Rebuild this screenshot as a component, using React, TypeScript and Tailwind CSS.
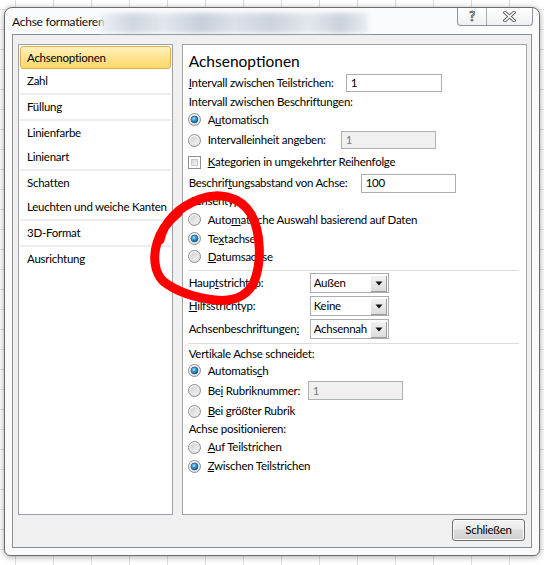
const font = "font-['Lato',sans-serif] text-[11.5px] tracking-[-0.25px]"

function Radio({ checked }: { checked?: boolean }) {
  return (
    <svg width="13" height="13" viewBox="0 0 13 13" className="shrink-0 -ml-px mr-[7px]">
      <circle cx="6.5" cy="6.5" r="6" fill="url(#rbOuter)" stroke="#8e8f8f" strokeWidth="1" />
      <circle cx="6.5" cy="6.5" r="4.2" fill="url(#rbInner)" />
      {checked && <circle cx="6.5" cy="6.5" r="3.4" fill="url(#rbDot)" stroke="#1b4f7a" strokeWidth="0.7" />}
    </svg>
  )
}

function Checkbox() {
  return (
    <div className="shrink-0 -ml-px mr-[7px] w-[13px] h-[13px] border border-[#8e8f8f] bg-white p-[2px]">
      <div className="w-full h-full border border-[#c8c8c8] bg-[linear-gradient(135deg,#d6d6d6,#f6f6f6)]" />
    </div>
  )
}

function TextBox({ value, disabled, className }: { value: string; disabled?: boolean; className: string }) {
  return (
    <div
      className={`${className} flex items-center pl-[4px] border ${
        disabled ? 'border-[#adb2b5] bg-[#f0f0f0] text-[#7a7a7a]' : 'border-[#abadb3] bg-white text-black'
      }`}
    >
      {value}
    </div>
  )
}

function Select({ value }: { value: string }) {
  return (
    <div className="w-[79px] h-[20px] flex items-center border border-[#abadb3] bg-white pl-[3px] pr-px">
      <span className="flex-1 overflow-hidden whitespace-nowrap">{value}</span>
      <div className="w-[17px] h-[17px] flex items-center justify-center border-l border-t border-white bg-[linear-gradient(to_bottom,#f2f2f2,#dcdcdc)] shadow-[inset_-1px_-1px_0_#9a9a9a]">
        <svg width="8" height="5" viewBox="0 0 8 5">
          <path d="M0.5 0.5 H7.5 L4 4.5 Z" fill="#111" />
        </svg>
      </div>
    </div>
  )
}

function NavItem({ label, selected }: { label: string; selected?: boolean }) {
  if (selected) {
    return (
      <div className="mx-px h-[23px] flex items-center pl-[6px] rounded-[3px] border border-[#e1b14d] bg-[linear-gradient(to_bottom,#fff1bd,#ffe290_50%,#ffd768)]">
        {label}
      </div>
    )
  }
  return <div className="h-[24px] flex items-center pl-[8px] whitespace-nowrap">{label}</div>
}

function NavSep() {
  return <div className="mx-px h-[2px] bg-[#ecedf1]" />
}

function Divider() {
  return <div className="-ml-px mr-[7px] mt-[4px] mb-[2px] h-px bg-[#dcdcdc]" />
}

export default function App() {
  return (
    <div
      className={`${font} relative w-[544px] h-[565px] overflow-hidden bg-white pl-[4px] pt-[7px] leading-[16px] text-black [background-image:linear-gradient(to_right,#dcdcdc_1px,transparent_1px),linear-gradient(to_bottom,#e2e2e2_1px,transparent_1px)] [background-size:38px_20px] [background-position:15px_9px]`}
    >
      <svg width="0" height="0" className="absolute">
        <defs>
          <radialGradient id="rbOuter" cx="0.35" cy="0.3" r="0.8">
            <stop offset="0" stopColor="#ffffff" />
            <stop offset="1" stopColor="#d9d9d9" />
          </radialGradient>
          <linearGradient id="rbInner" x1="0" y1="0" x2="1" y2="1">
            <stop offset="0" stopColor="#cfcfcf" />
            <stop offset="1" stopColor="#f4f4f4" />
          </linearGradient>
          <radialGradient id="rbDot" cx="0.4" cy="0.35" r="0.7">
            <stop offset="0" stopColor="#9fdcff" />
            <stop offset="0.55" stopColor="#2a8fd0" />
            <stop offset="1" stopColor="#0d4f86" />
          </radialGradient>
        </defs>
      </svg>

      <div className="w-[536px] h-[549px] flex flex-col rounded-t-[8px] rounded-b-[6px] border border-[#6c6c6c] bg-[#fafbfc] px-[7px] pb-[7px] shadow-[0_1px_6px_rgba(0,0,0,0.35)]">
        {/* title bar */}
        <div className="h-[27px] flex items-start">
          <div className="pt-[6px] whitespace-nowrap text-[12px] text-[#111]">Achse formatieren</div>
          <div className="mt-[5px] ml-[-4px] w-[268px] h-[20px] blur-[2px] opacity-80 bg-[linear-gradient(to_right,#eef1f5,#c6cedb_12%,#dde2ea_24%,#bcc5d3_38%,#d6dce5_50%,#c2cad7_64%,#dfe4ea_78%,#c0c8d5_90%,#e6eaef)]" />
          <div className="ml-auto -mr-px flex h-[18px] rounded-b-[4px] border border-t-0 border-[#8f949b] bg-[linear-gradient(to_bottom,#ffffff,#eef0f3)]">
            <div className="w-[29px] flex items-center justify-center border-r border-[#a9adb3] text-[13px] font-bold text-white [-webkit-text-stroke:0.8px_#4a4a4a] leading-none">
              ?
            </div>
            <div className="w-[45px] flex items-center justify-center">
              <svg width="13" height="11" viewBox="0 0 13 11">
                <path d="M2 1.5 L11 9.5 M11 1.5 L2 9.5" stroke="#555" strokeWidth="3.4" strokeLinecap="square" />
                <path d="M2 1.5 L11 9.5 M11 1.5 L2 9.5" stroke="#fff" strokeWidth="1.6" strokeLinecap="square" />
              </svg>
            </div>
          </div>
        </div>

        {/* client area */}
        <div className="flex-1 flex flex-col border border-[#8a8d91] bg-[#f0f0f0] pl-[5px] pr-[4px] pt-[9px] pb-[6px]">
          <div className="flex h-[471px]">
            <div className="w-[155px] border border-[#9da1a8] bg-white pt-px">
              <NavItem label="Achsenoptionen" selected />
              <NavItem label="Zahl" />
              <NavSep />
              <NavItem label="Füllung" />
              <NavSep />
              <NavItem label="Linienfarbe" />
              <NavItem label="Linienart" />
              <NavSep />
              <NavItem label="Schatten" />
              <NavItem label="Leuchten und weiche Kanten" />
              <NavSep />
              <NavItem label="3D-Format" />
              <NavSep />
              <NavItem label="Ausrichtung" />
            </div>

            <div className="ml-[9px] w-[346px] border border-[#a3a3a3] bg-white pl-[6px] pt-[5px] whitespace-nowrap">
              <div className="h-[22px] flex items-center text-[15.5px] tracking-normal">Achsenoptionen</div>
              <div className="h-[22px] flex items-center">
                <span className="w-[157px]">
                  <u>I</u>ntervall zwischen Teilstrichen:
                </span>
                <TextBox value="1" className="w-[96px] h-[18px]" />
              </div>
              <div className="h-[16px] flex items-center">Intervall zwischen Beschriftungen:</div>
              <div className="h-[19px] flex items-center">
                <Radio checked />
                <span>
                  A<u>u</u>tomatisch
                </span>
              </div>
              <div className="h-[22px] flex items-center">
                <Radio />
                <span className="w-[133px]">
                  Intervalleinheit an<u>g</u>eben:
                </span>
                <TextBox value="1" disabled className="w-[95px] h-[18px]" />
              </div>
              <div className="h-[22px] flex items-center">
                <Checkbox />
                <span>
                  <u>K</u>ategorien in umgekehrter Reihenfolge
                </span>
              </div>
              <div className="h-[20px] flex items-center">
                <span className="w-[172px]">
                  Beschrif<u>t</u>ungsabstand von Achse:
                </span>
                <TextBox value="100" className="w-[95px] h-[19px]" />
              </div>
              <div className="h-[16px] flex items-center">Achsentyp:</div>
              <div className="h-[21px] flex items-center">
                <Radio />
                <span>
                  Auto<u>m</u>atische Auswahl basierend auf Daten
                </span>
              </div>
              <div className="h-[17px] flex items-center">
                <Radio checked />
                <span>
                  Te<u>x</u>tachse
                </span>
              </div>
              <div className="h-[19px] flex items-center">
                <Radio />
                <span>
                  <u>D</u>atumsachse
                </span>
              </div>
              <Divider />
              <div className="h-[20px] flex items-center">
                <span className="w-[121px]">
                  Haup<u>t</u>strichtyp:
                </span>
                <Select value="Außen" />
              </div>
              <div className="mt-[3px] h-[20px] flex items-center">
                <span className="w-[121px]">
                  <u>H</u>ilfsstrichtyp:
                </span>
                <Select value="Keine" />
              </div>
              <div className="mt-[3px] h-[20px] flex items-center">
                <span className="w-[121px]">
                  Achsenbeschriftungen<u>:</u>
                </span>
                <Select value="Achsennah" />
              </div>
              <Divider />
              <div className="h-[16px] flex items-center">Vertikale Achse schneidet:</div>
              <div className="h-[17px] flex items-center">
                <Radio checked />
                <span>
                  Automatis<u>c</u>h
                </span>
              </div>
              <div className="h-[23px] flex items-center">
                <Radio />
                <span className="w-[100px]">
                  Be<u>i</u> Rubriknummer:
                </span>
                <TextBox value="1" disabled className="w-[95px] h-[19px]" />
              </div>
              <div className="h-[18px] flex items-center">
                <Radio />
                <span>
                  <u>B</u>ei größter Rubrik
                </span>
              </div>
              <div className="h-[18px] flex items-center">Achse positionieren:</div>
              <div className="h-[18px] flex items-center">
                <Radio />
                <span>
                  <u>A</u>uf Teilstrichen
                </span>
              </div>
              <div className="h-[20px] flex items-center">
                <Radio checked />
                <span>
                  <u>Z</u>wischen Teilstrichen
                </span>
              </div>
            </div>
          </div>

          <div className="mt-[4px] flex justify-end pr-[2px]">
            <button className="w-[73px] h-[22px] rounded-[3px] border border-[#707070] bg-[linear-gradient(to_bottom,#f3f3f3,#ebebeb_45%,#dddddd_50%,#cfcfcf)] shadow-[inset_0_0_0_1px_#fcfcfc] text-black">
              Schließen
            </button>
          </div>
        </div>
      </div>

      {/* hand-drawn red annotation */}
      <svg width="544" height="565" className="absolute inset-0 pointer-events-none">
        <path
          d="M160 240 C164 222 178 207 200 199 C218 192 240 196 251 214 C261 232 262 262 254 282 C247 297 232 302 215 300 C195 298 175 291 163 281 C154 272 153 256 157 243 C160 232 167 222 178 213"
          fill="none"
          stroke="#ff0000"
          strokeWidth="9"
          strokeLinecap="round"
          strokeLinejoin="round"
        />
      </svg>
    </div>
  )
}
